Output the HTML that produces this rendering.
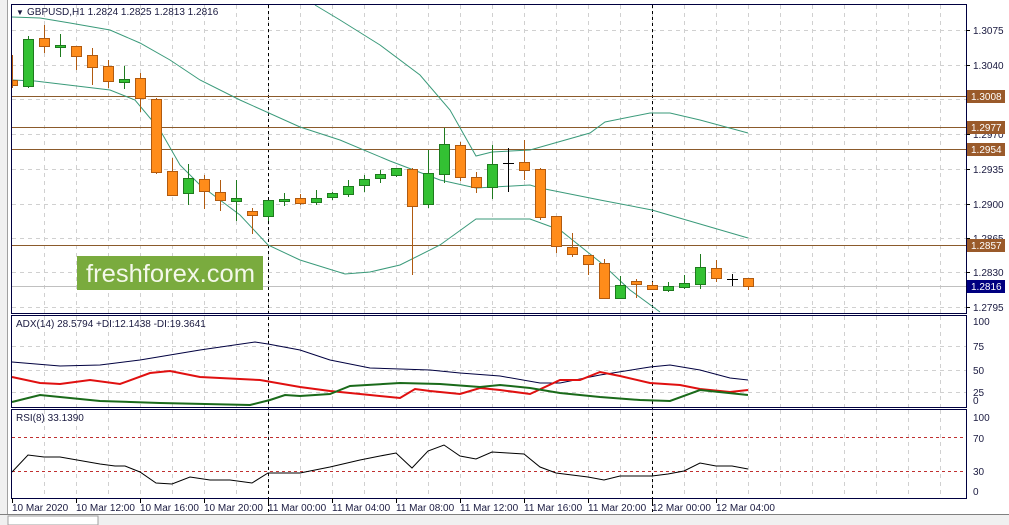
<!DOCTYPE html>
<html><head><meta charset="utf-8"><style>
html,body{margin:0;padding:0;background:#fff;width:1009px;height:525px;overflow:hidden}
svg{display:block;font-family:"Liberation Sans",Tahoma,sans-serif}
</style></head><body>
<svg id="s" width="1009" height="525" xmlns="http://www.w3.org/2000/svg">
<rect x="0" y="0" width="1009" height="525" fill="#fff"/>
<rect x="0" y="0" width="8" height="525" fill="#f0f0f0"/>
<line x1="7.5" y1="0" x2="7.5" y2="515" stroke="#a0a0a0"/>
<rect x="0" y="514" width="1009" height="11" fill="#f0f0f0"/>
<line x1="0" y1="514.5" x2="1009" y2="514.5" stroke="#808080"/>
<rect x="8" y="516" width="90" height="9" fill="#fff" stroke="#a0a0a0"/>
<g id="grid"></g>
<g id="hl"></g>
<g id="bands" fill="none" stroke="#3a9a7a" stroke-width="1"></g>
<g id="candles"></g>
<g id="ind" fill="none"></g>
<!-- watermark -->
<rect x="77" y="256" width="186" height="34" fill="#7aab3e"/>
<text x="86" y="282" font-size="25" fill="#f4f8ea" textLength="169" lengthAdjust="spacingAndGlyphs">freshforex.com</text>
<!-- frames -->
<g fill="none" stroke="#000040" stroke-width="1">
<rect x="11.5" y="4.5" width="955" height="309"/>
<rect x="11.5" y="315.5" width="955" height="92"/>
<rect x="11.5" y="409.5" width="955" height="89"/>
</g>
<g font-size="10" fill="#1a1a40">
<text x="16" y="15" font-size="8">▼</text>
<text x="27" y="15">GBPUSD,H1  1.2824 1.2825 1.2813 1.2816</text>
<text x="16" y="327">ADX(14) 28.5794 +DI:12.1438 -DI:19.3641</text>
<text x="16" y="421">RSI(8) 33.1390</text>
</g>
<g id="axis" font-size="10" fill="#1a1a40"></g>
</svg>
<script>
var NS="http://www.w3.org/2000/svg";
function el(p,t,a,txt){var e=document.createElementNS(NS,t);for(var k in a)e.setAttribute(k,a[k]);if(txt!=null)e.textContent=txt;document.getElementById(p).appendChild(e);return e;}
for(var x=44;x<966;x+=32){[[5,313],[316,407],[410,498]].forEach(function(r){el("grid","line",{x1:x+.5,y1:r[0],x2:x+.5,y2:r[1],stroke:"#d0d0d0","stroke-dasharray":"4,4"});});}
var py=[30,65,99,134,169,204,238,272,307],pl=["1.3075","1.3040","1.3005","1.2970","1.2935","1.2900","1.2865","1.2830","1.2795"];
py.forEach(function(y,i){el("grid","line",{x1:12,y1:y+.5,x2:966,y2:y+.5,stroke:"#d0d0d0","stroke-dasharray":"4,4"});el("axis","line",{x1:966,y1:y+.5,x2:970,y2:y+.5,stroke:"#000"});el("axis","text",{x:973,y:y+4},pl[i]);});
[[321,"100"],[346,"75"],[370,"50"],[392,"25"],[400,"0"]].forEach(function(a){el("axis","text",{x:973,y:a[0]+4},a[1]);});
[[346],[370],[392]].forEach(function(a){el("grid","line",{x1:12,y1:a[0]+.5,x2:966,y2:a[0]+.5,stroke:"#d0d0d0","stroke-dasharray":"4,4"});});
[[417,"100"],[438,"70"],[471,"30"],[491,"0"]].forEach(function(a){el("axis","text",{x:973,y:a[0]+4},a[1]);});
el("grid","line",{x1:12,y1:437.5,x2:966,y2:437.5,stroke:"#c03030","stroke-dasharray":"3,3"});
el("grid","line",{x1:12,y1:471.5,x2:966,y2:471.5,stroke:"#c03030","stroke-dasharray":"3,3"});
[268,652].forEach(function(x){el("grid","line",{x1:x+.5,y1:5,x2:x+.5,y2:514,stroke:"#000","stroke-dasharray":"3,3"});});
var tl=["10 Mar 2020","10 Mar 12:00","10 Mar 16:00","10 Mar 20:00","11 Mar 00:00","11 Mar 04:00","11 Mar 08:00","11 Mar 12:00","11 Mar 16:00","11 Mar 20:00","12 Mar 00:00","12 Mar 04:00"];
tl.forEach(function(t,i){var x=12+64*i;el("axis","line",{x1:x+.5,y1:498,x2:x+.5,y2:503,stroke:"#000"});el("axis","text",{x:x,y:511},t);});
[[96,"1.3008"],[127,"1.2977"],[149,"1.2954"],[245,"1.2857"]].forEach(function(a){el("hl","line",{x1:12,y1:a[0]+.5,x2:966,y2:a[0]+.5,stroke:"#8b5a2b"});});
el("hl","line",{x1:12,y1:286.5,x2:966,y2:286.5,stroke:"#c0c0c0"});
[[96,"1.3008"],[127,"1.2977"],[149,"1.2954"],[245,"1.2857"]].forEach(function(a){el("axis","rect",{x:967,y:a[0]-6,width:38,height:13,fill:"#9a5a2a"});el("axis","text",{x:971,y:a[0]+4,fill:"#fff"},a[1]);});
el("axis","rect",{x:967,y:280,width:38,height:13,fill:"#000080"});el("axis","text",{x:971,y:290,fill:"#fff"},"1.2816");
var C=[[80,85,55,88,'o'],[86,39,36,88,'g'],[38,46,25,53,'o'],[47,45,34,57,'g'],[46,56,46,70,'o'],[55,67,48,85,'o'],[66,81,60,88,'o'],[82,79,66,89,'g'],[78,98,73,112,'o'],[99,172,98,174,'o'],[171,195,158,196,'o'],[193,178,164,205,'g'],[179,191,175,209,'o'],[192,200,180,211,'o'],[201,198,180,221,'g'],[211,215,208,234,'o'],[216,200,200,221,'g'],[201,199,193,206,'g'],[198,203,194,205,'o'],[202,198,190,205,'g'],[197,193,192,200,'g'],[194,186,180,197,'g'],[185,179,175,192,'g'],[178,174,170,183,'g'],[175,168,168,177,'g'],[169,206,168,275,'o'],[204,173,150,208,'g'],[174,144,128,183,'g'],[145,177,142,181,'o'],[177,187,172,193,'o'],[187,164,145,199,'g'],[163,163,148,192,'d'],[162,170,140,180,'o'],[169,217,168,220,'o'],[216,246,216,253,'o'],[247,254,233,257,'o'],[255,264,255,275,'o'],[263,298,259,299,'o'],[298,285,276,299,'g'],[281,284,279,298,'o'],[285,289,282,289,'o'],[290,286,282,292,'g'],[287,283,275,289,'g'],[284,267,254,289,'g'],[268,278,260,282,'o'],[279,279,274,286,'d'],[278,286,278,290,'o']];
C.forEach(function(c,i){var x=12+16*i;var t=c[4];
 var col=t=='o'?'#b05a10':(t=='g'?'#1e7a1e':'#000');
 el("candles","line",{x1:x+.5,y1:c[2],x2:x+.5,y2:c[3],stroke:col});
 if(t=='d'){el("candles","line",{x1:x-5,y1:c[0]+.5,x2:x+6,y2:c[0]+.5,stroke:"#000"});return;}
 var top=Math.min(c[0],c[1]),h=Math.max(2,Math.abs(c[0]-c[1]));
 var x0=x-5,w=10; if(x0<12){w-=12-x0;x0=12;}
 el("candles","rect",{x:x0+.5,y:top+.5,width:w,height:h,fill:t=='o'?'#ff8c1a':'#33c133',stroke:col});
});
function pl_(g,pts,st,w){el(g,"polyline",{points:pts.map(function(p){return p.join(",")}).join(" "),stroke:st,"stroke-width":w||1,fill:"none"});}
pl_("bands",[[315,5],[340,20],[380,45],[420,75],[450,110],[476,156],[492,152],[530,150],[590,133],[605,122],[650,113],[670,113],[700,120],[748,133]],"#3a9a7a");
pl_("bands",[[12,17],[40,18],[70,23],[110,30],[140,43],[170,60],[200,80],[240,100],[300,127],[340,140],[390,161],[440,180],[476,188],[530,185],[540,188],[600,200],[652,210],[700,224],[748,238]],"#3a9a7a");
pl_("bands",[[12,80],[35,81],[110,90],[135,100],[160,130],[180,165],[200,185],[240,215],[268,245],[300,260],[345,274],[370,272],[400,265],[440,245],[476,219],[530,219],[560,230],[600,262],[630,290],[660,312]],"#3a9a7a");
pl_("ind",[[12,362],[60,366],[100,365],[140,360],[200,350],[255,342],[268,344],[300,350],[330,360],[370,368],[400,369],[430,370],[460,373],[500,376],[540,383],[560,383],[600,375],[650,367],[670,365],[700,370],[730,378],[748,380]],"#000040",1);
pl_("ind",[[12,377],[40,383],[60,384],[90,380],[120,384],[150,373],[170,371],[200,377],[260,380],[300,387],[330,391],[370,395],[400,398],[415,389],[430,391],[460,394],[480,388],[500,390],[530,394],[560,380],[580,380],[600,372],[620,376],[650,383],[680,385],[700,389],[730,392],[748,390]],"#e01010",2);
pl_("ind",[[12,402],[40,395],[70,398],[100,401],[160,403],[250,405],[270,400],[285,395],[300,396],[330,394],[350,386],[400,383],[440,384],[480,387],[500,385],[530,388],[560,393],[600,397],[640,400],[670,401],[700,390],[748,395]],"#1a6a1a",2);
pl_("ind",[[12,472],[28,455],[44,457],[60,457],[100,464],[115,466],[125,466],[140,472],[156,483],[172,484],[190,477],[210,480],[230,480],[252,483],[268,473],[300,473],[330,467],[360,460],[380,456],[396,453],[412,468],[428,451],[444,445],[460,456],[476,459],[492,452],[508,453],[524,454],[540,467],[556,473],[572,475],[588,477],[604,480],[620,476],[652,476],[668,474],[684,471],[700,463],[716,466],[732,466],[748,469]],"#000",1);
</script>
</body></html>
